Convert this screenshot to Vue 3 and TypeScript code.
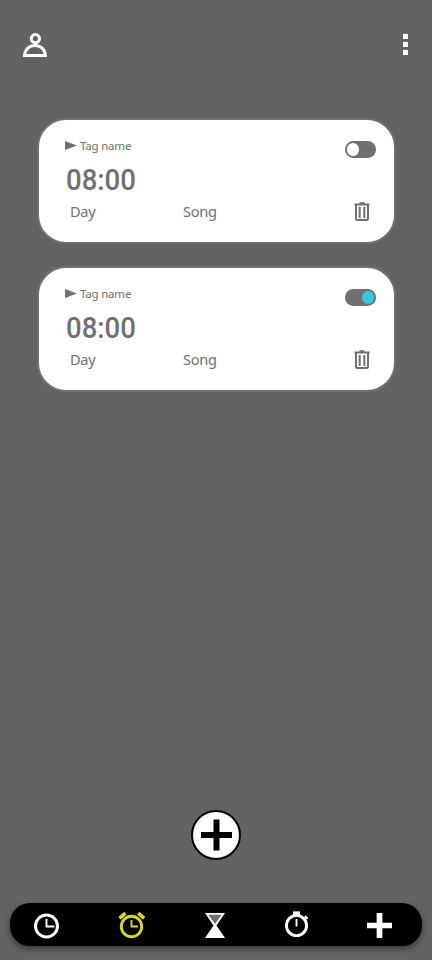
<script setup lang="ts">
import { ref } from 'vue'

interface Alarm {
  id: number
  tag: string
  time: string
  day: string
  song: string
  enabled: boolean
}

const alarms = ref<Alarm[]>([
  { id: 1, tag: 'Tag name', time: '08:00', day: 'Day', song: 'Song', enabled: false },
  { id: 2, tag: 'Tag name', time: '08:00', day: 'Day', song: 'Song', enabled: true },
])
</script>

<template>
  <div class="screen">
    <header class="topbar">
      <svg class="profile" viewBox="0 0 24 24" fill="none" stroke="#fff" stroke-width="3">
        <circle cx="12.4" cy="5.6" r="4.1" />
        <path d="M1.6 22.5C2 16.4 6.5 12.5 12 12.5S22 16.4 22.4 22.5Z" />
      </svg>
      <div class="more"><i></i><i></i><i></i></div>
    </header>

    <main class="alarms">
      <article v-for="alarm in alarms" :key="alarm.id" class="card">
        <div class="info">
          <div class="tag">
            <svg class="flag" viewBox="0 0 12 9"><path d="M0 0L12 4.5 0 9Z" fill="#707070" /></svg>
            <span>{{ alarm.tag }}</span>
          </div>
          <div class="time">{{ alarm.time }}</div>
          <div class="details">
            <span class="day">{{ alarm.day }}</span>
            <span>{{ alarm.song }}</span>
          </div>
        </div>
        <div class="actions">
          <div class="toggle" :class="{ on: alarm.enabled }" @click="alarm.enabled = !alarm.enabled">
            <span class="knob"></span>
          </div>
          <svg class="trash" viewBox="0 0 16 19" fill="none" stroke="#707070">
            <path d="M0.5 2.5H15.5M5.5 1.3H10.5" stroke-width="2" />
            <path d="M2 3V16.7Q2 18 3.3 18H12.7Q14 18 14 16.7V3" stroke-width="2" />
            <path d="M5.7 5V16M10.3 5V16" stroke-width="2" />
          </svg>
        </div>
      </article>
    </main>

    <div class="add">
      <svg viewBox="0 0 50 50">
        <circle cx="25" cy="25" r="24" fill="#fff" stroke="#000" stroke-width="2" />
        <path d="M10 25H41M25.5 9.5V40.5" stroke="#000" stroke-width="6" />
      </svg>
    </div>

    <nav class="nav">
      <svg class="clock" viewBox="0 0 26 26" fill="none" stroke="#fff">
        <circle cx="12.5" cy="13" r="11" stroke-width="3" />
        <path d="M12.5 6V13.5H20.5" stroke-width="1.9" />
      </svg>
      <svg class="alarm" viewBox="0 0 28 28" fill="none" stroke="#d4d62b">
        <circle cx="13.5" cy="15.5" r="10.2" stroke-width="2.9" />
        <path d="M13.5 9V15.5H20" stroke-width="1.9" />
        <path d="M1.5 7.3L7.3 2.1M20.3 2.1L26.1 7.3" stroke-width="3.6" />
      </svg>
      <svg class="hourglass" viewBox="0 0 20 25">
        <path d="M0 0H20L11.5 12.5 20 25H0L8.5 12.5Z" fill="#fff" />
        <path d="M3.3 1.8H16.7L10 11Z" fill="#707070" />
      </svg>
      <svg class="stopwatch" viewBox="0 0 24 27" fill="none" stroke="#fff">
        <circle cx="11.5" cy="14.5" r="10.1" stroke-width="2.9" />
        <path d="M8 2.7H15" stroke-width="4.6" />
        <path d="M11.5 8V15.5" stroke-width="1.9" />
        <path d="M18.5 9L22 5.8M20 5L22.7 7.7" stroke-width="2" />
      </svg>
      <svg class="plus" viewBox="0 0 25 25">
        <path d="M0 12.5H25M12.5 0V25" stroke="#fff" stroke-width="5.7" />
      </svg>
    </nav>
  </div>
</template>

<style>
body {
  margin: 0;
  background: #636363;
}
</style>

<style scoped>
.screen {
  box-sizing: border-box;
  width: 432px;
  height: 960px;
  padding: 32px 10px 14px;
  display: flex;
  flex-direction: column;
  background: #636363;
  color: #707070;
  font-family: 'Noto Sans', 'Open Sans', sans-serif;
  overflow: hidden;
}
svg {
  display: block;
}
.topbar {
  height: 86px;
  display: flex;
  justify-content: space-between;
  padding: 0 14px 0 13px;
  box-sizing: border-box;
}
.profile {
  width: 24px;
  height: 24px;
  margin-top: 1px;
}
.more {
  display: flex;
  flex-direction: column;
  gap: 3px;
  padding-top: 2px;
}
.more i {
  width: 5px;
  height: 5px;
  background: #fff;
}
.alarms {
  flex: 1;
  display: flex;
  flex-direction: column;
  gap: 22px;
  padding: 0 26px 0 27px;
}
.card {
  box-sizing: border-box;
  height: 126px;
  display: flex;
  justify-content: space-between;
  padding: 19px 18px 19px 26px;
  background: #fff;
  border: 2px solid #707070;
  border-radius: 29px;
}
.tag {
  display: flex;
  align-items: center;
  gap: 3px;
  height: 14px;
  font-size: 11.5px;
  line-height: 14px;
  letter-spacing: -0.2px;
}
.flag {
  width: 12px;
  height: 9px;
  margin-top: -2px;
}
.time {
  width: max-content;
  height: 30px;
  margin: 12px 0 0 1px;
  font: 500 29px/30px Roboto, sans-serif;
  transform: scaleX(0.95);
  transform-origin: left;
}
.details {
  display: grid;
  grid-template-columns: 113px auto;
  height: 20px;
  margin: 6px 0 0 5px;
  font-size: 14.6px;
  line-height: 20px;
  letter-spacing: -0.3px;
}
.actions {
  display: flex;
  flex-direction: column;
  align-items: flex-end;
  padding-top: 2px;
}
.toggle {
  box-sizing: border-box;
  display: flex;
  align-items: center;
  width: 31px;
  height: 16.6px;
  padding: 0 1.7px;
  border-radius: 8.3px;
  background: #707070;
}
.toggle.on {
  justify-content: flex-end;
}
.knob {
  width: 12.5px;
  height: 12.5px;
  border-radius: 50%;
  background: #fff;
}
.on .knob {
  background: #36c8e0;
}
.trash {
  width: 16px;
  height: 19px;
  margin: 44.4px 6px 0 0;
}
.add {
  align-self: center;
  width: 50px;
  height: 50px;
  margin-bottom: 43px;
}
.nav {
  box-sizing: border-box;
  height: 43px;
  flex: none;
  display: flex;
  justify-content: space-between;
  align-items: flex-start;
  padding: 8px 30px 0 24px;
  background: #000;
  border-radius: 20px;
  box-shadow: 0 3px 6px rgba(0, 0, 0, 0.45);
}
.clock {
  width: 26px;
  height: 26px;
  margin-top: 2px;
}
.alarm {
  width: 28px;
  height: 28px;
  margin: 0 1px 0 -1px;
}
.hourglass {
  width: 20px;
  height: 25px;
  margin: 2px 1px 0 -1px;
}
.stopwatch {
  width: 24px;
  height: 27px;
  margin-left: 1px;
  margin-right: -1px;
}
.plus {
  width: 25px;
  height: 25px;
  margin-top: 2px;
}
</style>
